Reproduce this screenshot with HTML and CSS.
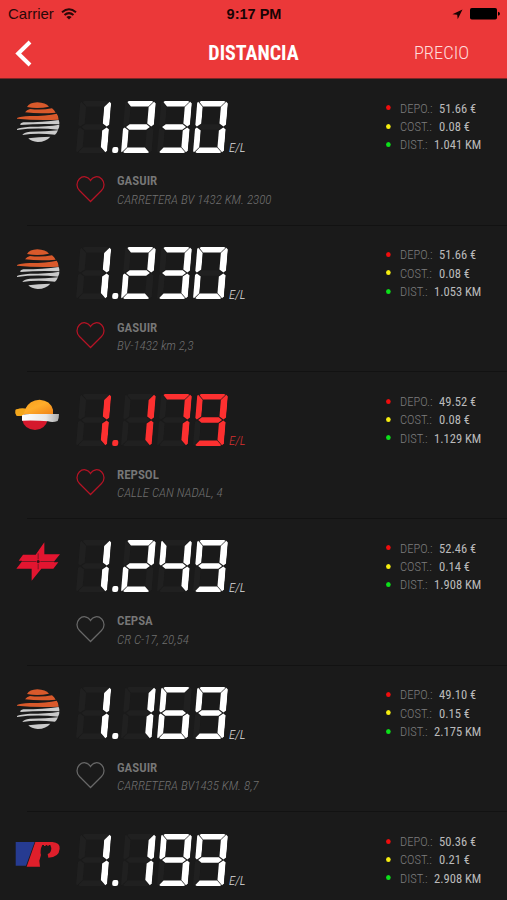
FILE: index.html
```html
<!DOCTYPE html>
<html lang="es">
<head>
<meta charset="utf-8">
<title>Gasolineras</title>
<link rel="stylesheet" href="styles.css">
</head>
<body>
<svg class="defs" aria-hidden="true">
  <symbol id="heart" viewBox="0 0 30 28"><path d="M15 27 L3.600 15.600 C.2 12.200 .2 7 3.400 3.600 C7 .1 12.200 .6 15 5.200 C17.800 .6 23 .1 26.600 3.600 C29.800 7 29.800 12.200 26.400 15.600 Z" fill="none" stroke="currentColor" stroke-width="1.300"/></symbol>
  <symbol id="gasuir" viewBox="45 45 144 138">
    <g fill="#d9592b"><path d="M81 66 Q88 53 112 52 Q137 53 147 65 Q114 72 81 66Z"/><path d="M75 82 Q80 74 90 72 Q125 76 156 70 Q163 75 167 83 Q120 87 75 82Z"/><path d="M51 99 Q60 94 90 93 Q140 93 170 86 Q176 93 176 104 Q110 107 51 101Z"/></g>
    <g fill="#cbcbcb"><path d="M61 120 Q60 114 70 112 Q130 112 176 105 Q179 111 178 118 Q120 115 61 120Z"/><path d="M51 132 Q60 127 90 125 Q140 125 178 119 Q179 126 174 134 Q110 127 51 135Z"/><path d="M67 150 Q70 142 90 140 Q140 140 174 136 Q171 144 165 149 Q110 143 67 150Z"/><path d="M85 160 Q115 156 151 155 Q139 170 113 171 Q94 170 85 160Z"/></g>
  </symbol>
  <symbol id="repsol" viewBox="45 40 144 138">
    <defs><linearGradient id="sun" x1="0" y1="0" x2="1" y2="1"><stop offset="0" stop-color="#f59a18"/><stop offset=".5" stop-color="#ffad2a"/><stop offset="1" stop-color="#ee7d16"/></linearGradient><linearGradient id="band" x1="0" x2="1"><stop offset="0" stop-color="#fff"/><stop offset=".65" stop-color="#e6e6e6"/><stop offset="1" stop-color="#aaa"/></linearGradient></defs>
    <path d="M66 118 H144 Q136 150 105 151 Q72 149 66 118Z" fill="#d5182c"/>
    <path d="M47 90 Q60 85 76 87 Q88 62 119 60 Q151 62 159 90 V103 H77 Q66 111 50 108 Q45 103 47 90Z" fill="url(#sun)"/>
    <path d="M47 90 Q62 85 76 87 Q73 102 66 108 Q57 111 49 107 Q45 101 47 90Z" fill="#f3a71c"/>
    <path d="M66 107 Q78 102 95 103 H177 Q177 116 173 124 Q158 130 144 125 Q105 121 66 123Z" fill="url(#band)"/>
  </symbol>
  <symbol id="cepsa" viewBox="45 30 144 138">
    <path fill="#e31530" d="M133 37 V73 H180 L164 92 L162 97 H175 L160 116 H124 L95 152 V116 H49 L64 97 L66 92 H56 L69 74 H107Z"/>
    <g fill="none" stroke="#1a1a1a" stroke-width="1.600"><path d="M58 94.500 H108M121 94.500 H174M114.500 70 V88M114.500 101 V118"/></g>
    <circle cx="114.500" cy="94.500" r="4.500" fill="#3a1218"/>
  </symbol>
  <symbol id="petro" viewBox="45 70 144 138">
    <path d="M47 97 H104 L78 168 H47Z" fill="#263b91"/>
    <path d="M106 97 H157 Q181 99 179 117 Q177 143 145 144 L143 133 Q154 130 154 115 L151 106 H146 V109 H142 V106 H137 V109 H132 V106 H127 Q119 122 123 136 L118 153 L120 171 H80Z" fill="#df1f2b"/>
  </symbol>
</svg>

<header class="top">
  <div class="status">
    <div class="carrier"><span>Carrier</span>
      <svg width="16" height="12" viewBox="0 0 16 12"><g fill="none" stroke="#2a0808" stroke-width="2"><path d="M1 4.300 Q8 -1.700 15 4.300"/><path d="M3.500 7 Q8 3.200 12.500 7"/></g><path d="M5.400 8.900 Q8 6.900 10.600 8.900 L8 11.600Z" fill="#2a0808"/></svg>
    </div>
    <div class="clock">9:17 PM</div>
    <div class="power">
      <svg width="11" height="11" viewBox="0 0 11 11"><path d="M10.500 .5 L5.700 10.300 L5.200 5.800 L.4 5.300Z" fill="#180404"/></svg>
      <svg width="30" height="12" viewBox="0 0 30 12"><rect width="27" height="11.500" rx="1.800"/><path d="M28 3.800 Q30 4.200 30 5.800 Q30 7.400 28 7.800Z"/></svg>
    </div>
  </div>
  <nav class="tabs">
    <svg class="back" width="18" height="27" viewBox="0 0 18 27"><path d="M15 2 L3.200 13.500 L15 25" fill="none" stroke="#fff" stroke-width="4"/></svg>
    <span class="tab active">DISTANCIA</span>
    <span class="tab">PRECIO</span>
  </nav>
</header>

<main class="list">
  <article class="station">
    <svg class="logo"><use href="#gasuir"/></svg>
    <div class="price"><div class="lcd" role="img" aria-label="1.230" data-value="1.230"></div><span class="unit">E/L</span></div>
    <dl class="stats"><dt>DEPO.:</dt><dd>51.66 €</dd><dt>COST.:</dt><dd>0.08 €</dd><dt>DIST.:</dt><dd>1.041 KM</dd></dl>
    <div class="place"><svg class="heart on"><use href="#heart"/></svg><div><h2>GASUIR</h2><p>CARRETERA BV 1432 KM. 2300</p></div></div>
  </article>
  <article class="station">
    <svg class="logo"><use href="#gasuir"/></svg>
    <div class="price"><div class="lcd" role="img" aria-label="1.230" data-value="1.230"></div><span class="unit">E/L</span></div>
    <dl class="stats"><dt>DEPO.:</dt><dd>51.66 €</dd><dt>COST.:</dt><dd>0.08 €</dd><dt>DIST.:</dt><dd>1.053 KM</dd></dl>
    <div class="place"><svg class="heart on"><use href="#heart"/></svg><div><h2>GASUIR</h2><p>BV-1432 km 2,3</p></div></div>
  </article>
  <article class="station best">
    <svg class="logo"><use href="#repsol"/></svg>
    <div class="price"><div class="lcd" role="img" aria-label="1.179" data-value="1.179"></div><span class="unit">E/L</span></div>
    <dl class="stats"><dt>DEPO.:</dt><dd>49.52 €</dd><dt>COST.:</dt><dd>0.08 €</dd><dt>DIST.:</dt><dd>1.129 KM</dd></dl>
    <div class="place"><svg class="heart on"><use href="#heart"/></svg><div><h2>REPSOL</h2><p>CALLE CAN NADAL, 4</p></div></div>
  </article>
  <article class="station">
    <svg class="logo"><use href="#cepsa"/></svg>
    <div class="price"><div class="lcd" role="img" aria-label="1.249" data-value="1.249"></div><span class="unit">E/L</span></div>
    <dl class="stats"><dt>DEPO.:</dt><dd>52.46 €</dd><dt>COST.:</dt><dd>0.14 €</dd><dt>DIST.:</dt><dd>1.908 KM</dd></dl>
    <div class="place"><svg class="heart"><use href="#heart"/></svg><div><h2>CEPSA</h2><p>CR C-17, 20,54</p></div></div>
  </article>
  <article class="station">
    <svg class="logo"><use href="#gasuir"/></svg>
    <div class="price"><div class="lcd" role="img" aria-label="1.169" data-value="1.169"></div><span class="unit">E/L</span></div>
    <dl class="stats"><dt>DEPO.:</dt><dd>49.10 €</dd><dt>COST.:</dt><dd>0.15 €</dd><dt>DIST.:</dt><dd>2.175 KM</dd></dl>
    <div class="place"><svg class="heart"><use href="#heart"/></svg><div><h2>GASUIR</h2><p>CARRETERA BV1435 KM. 8,7</p></div></div>
  </article>
  <article class="station last">
    <svg class="logo"><use href="#petro"/></svg>
    <div class="price"><div class="lcd" role="img" aria-label="1.199" data-value="1.199"></div><span class="unit">E/L</span></div>
    <dl class="stats"><dt>DEPO.:</dt><dd>50.36 €</dd><dt>COST.:</dt><dd>0.21 €</dd><dt>DIST.:</dt><dd>2.908 KM</dd></dl>
  </article>
</main>
<script src="script.js"></script>
</body>
</html>
```

FILE: styles.css
```css
* { box-sizing: border-box; margin: 0; padding: 0; }
body { width: 507px; height: 900px; overflow: hidden; background: #1a1a1a; font-family: "Roboto Condensed", Roboto, sans-serif; }
svg { display: block; }
.defs { position: absolute; width: 0; height: 0; }

.top { height: 79px; background: #eb3839; border-bottom: 1px solid #7c2626; }
.status { display: grid; grid-template-columns: 1fr 80px 1fr; height: 28px; padding: 0 7px 0 8px; align-items: center; font: 15px/28px "Liberation Sans", sans-serif; color: #2a0808; }
.carrier { display: flex; align-items: center; gap: 7px; }
.clock { text-align: center; font-size: 14.500px; font-weight: bold; color: #180404; }
.power { display: flex; align-items: center; justify-content: flex-end; gap: 7px; }
.tabs { display: grid; grid-template-columns: 160px 187px 1fr; align-items: center; height: 50px; }
.back { margin-left: 15px; }
.tab { text-align: center; font-size: 18.500px; font-weight: 300; color: #ffdcdc; }
.tab:last-child { padding-left: 29px; }
.tab.active { font-size: 20px; font-weight: 700; color: #fff; }

.station { display: grid; grid-template-columns: 76px 310px 1fr; grid-template-rows: 95.670px 51px; height: 146.670px; background: linear-gradient(#121212, #121212) 27px 100% / 100% 1px no-repeat; }
.station.last { grid-template-rows: 87px; height: 87px; background: none; }
.logo { width: 48px; height: 46px; margin: 21px 0 0 15px; }
.price { display: flex; align-items: flex-start; padding-top: 21.500px; }
.lcd { display: flex; flex: none; width: 149px; height: 52px; transform: skewX(-4.800deg); transform-origin: left bottom; color: #fff; }
.best .lcd { color: #fd3030; }
.digit { position: relative; flex: none; width: 30.500px; height: 52px; margin-right: 5.600px; }
.digit.wide { margin-right: 14px; }
.seg { position: absolute; inset: 0; background: #202020; }
.seg.lit { background: currentColor; }
.seg.a { clip-path: polygon(4px 0, 27px 0, 28.500px .7px, 24px 5.400px, 6.500px 5.400px, 2.500px 1px); }
.seg.b { clip-path: polygon(29.300px .8px, 31px 2.500px, 31px 23.500px, 28.500px 25.600px, 24.300px 22.500px, 24.300px 6px); }
.seg.c { clip-path: polygon(28.500px 26.400px, 31px 28.500px, 31px 49.500px, 29.300px 51.200px, 24.300px 46px, 24.300px 29.500px); }
.seg.d { clip-path: polygon(4px 52px, 27px 52px, 28.500px 51.300px, 24px 46.600px, 6.500px 46.600px, 2.500px 51px); }
.seg.e { clip-path: polygon(2px 26.400px, -.5px 28.500px, -.5px 49.500px, 1.200px 51.200px, 6.200px 46px, 6.200px 29.500px); }
.seg.f { clip-path: polygon(1.200px .8px, -.5px 2.500px, -.5px 23.500px, 2px 25.600px, 6.200px 22.500px, 6.200px 6px); }
.seg.b, .seg.c { right: -1px; }
.seg.e, .seg.f { left: 0; }
.seg.g { clip-path: polygon(3.300px 26px, 6.800px 23.200px, 23.700px 23.200px, 27.200px 26px, 23.700px 28.800px, 6.800px 28.800px); }
.point { position: absolute; left: 35.500px; bottom: 0; width: 6px; height: 6px; border-radius: 2px; background: currentColor; }
.unit { margin: 39.500px 0 0 4px; font-size: 13px; line-height: 15px; font-style: italic; font-weight: 300; color: #ddd; }
.best .unit { color: #d83030; }

.stats { display: grid; grid-template-columns: 32px 1fr; grid-auto-rows: 18.400px; column-gap: 6.500px; padding: 19.600px 0 0 14px; font-size: 13.500px; line-height: 18.400px; white-space: nowrap; }
.stats dt { position: relative; font-weight: 300; color: #7d7d7d; transform: scaleX(.93); transform-origin: left; }
.stats dt::before { content: ""; position: absolute; left: -15px; top: 6.700px; width: 5px; height: 5px; border-radius: 50%; background: #f00d0d; }
.stats dt:nth-of-type(2)::before { background: #f6ee10; }
.stats dt:nth-of-type(3)::before { background: #0ce01a; }
.stats dd { color: #bbb; transform: scaleX(.93); transform-origin: left; }
.stats dd:last-child { margin-left: -4.500px; }

.place { grid-column: 2 / 4; display: flex; gap: 12px; white-space: nowrap; }
.place > div { margin-top: -2.400px; }
.place h2, .place p { line-height: 18.400px; font-size: 13px; }
.place h2 { font-weight: 600; color: #777; }
.place p { font-weight: 300; font-style: italic; color: #707070; }
.heart { width: 29px; height: 28px; color: #686868; }
.heart.on { color: #b51325; }
```

FILE: script.js
```js
// Segments lit for each digit of the seven-segment display.
const LIT = ["abcdef", "bc", "abged", "abgcd", "fgbc", "afgcd", "afgedc", "abc", "abcdefg", "abcdfg"];

document.querySelectorAll(".lcd").forEach((lcd) => {
  const value = lcd.dataset.value;
  [...value].forEach((ch, i) => {
    if (ch === ".") return;
    const digit = document.createElement("span");
    digit.className = "digit";
    [..."abcdefg"].forEach((name) => {
      const seg = document.createElement("i");
      seg.className = "seg " + name + (LIT[ch].includes(name) ? " lit" : "");
      digit.append(seg);
    });
    if (value[i + 1] === ".") {
      digit.classList.add("wide");
      const point = document.createElement("i");
      point.className = "point";
      digit.append(point);
    }
    lcd.append(digit);
  });
});
```
